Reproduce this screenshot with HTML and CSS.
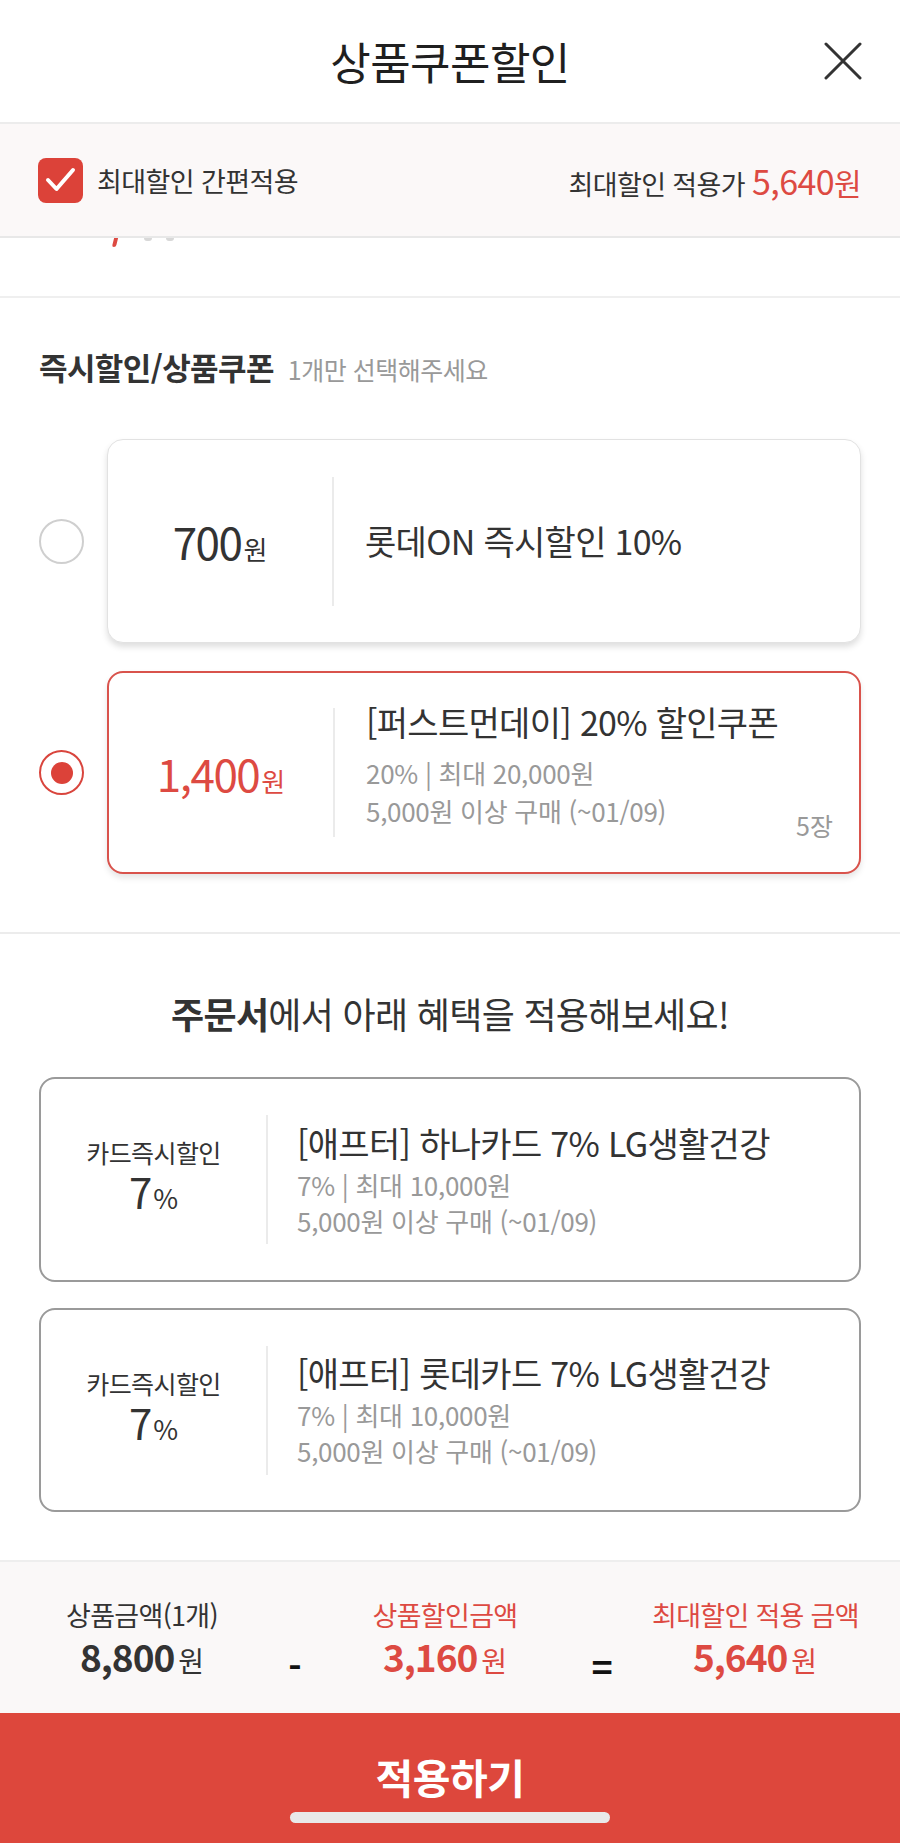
FILE: index.html
```html
<!DOCTYPE html>
<html lang="ko">
<head>
<meta charset="utf-8">
<title>상품쿠폰할인</title>
<link rel="stylesheet" href="styles.css">
</head>
<body>
<div class="page">
  <header class="header">
    <div class="header-side"></div>
    <h1 class="title">상품쿠폰할인</h1>
    <div class="header-side header-right">
      <svg class="close" width="38" height="38" viewBox="0 0 38 38"><path d="M2 2 L36 36 M36 2 L2 36" stroke="#333" stroke-width="3" fill="none" stroke-linecap="round"/></svg>
    </div>
  </header>

  <div class="band">
    <div class="band-left">
      <span class="checkbox">
        <svg width="45" height="45" viewBox="0 0 45 45"><path d="M10 22 L18.5 31 L35 12" stroke="#fff" stroke-width="4" fill="none" stroke-linecap="round" stroke-linejoin="round"/></svg>
      </span>
      <span class="band-label">최대할인 간편적용</span>
    </div>
    <div class="band-right">최대할인 적용가 <span class="band-price">5,640<span class="won-s">원</span></span></div>
  </div>

  <div class="peek" aria-hidden="true">
    <span class="frag frag-red"></span>
    <span class="frag frag-gray"></span>
    <span class="frag frag-gray"></span>
  </div>

  <section class="section s1">
    <div class="sec-title"><strong>즉시할인/상품쿠폰</strong><span class="sec-sub">1개만 선택해주세요</span></div>

    <div class="row">
      <span class="radio"></span>
      <div class="card card-plain">
        <div class="amt"><span class="amt-num">700</span><span class="amt-won">원</span></div>
        <div class="vline"></div>
        <div class="info">
          <div class="info-title">롯데ON 즉시할인 10%</div>
        </div>
      </div>
    </div>

    <div class="row">
      <span class="radio on"><span class="dot"></span></span>
      <div class="card card-sel">
        <div class="amt red"><span class="amt-num">1,400</span><span class="amt-won">원</span></div>
        <div class="vline"></div>
        <div class="info">
          <div class="info-title">[퍼스트먼데이] 20% 할인쿠폰</div>
          <div class="info-line">20% | 최대 20,000원</div>
          <div class="info-line">5,000원 이상 구매 (~01/09)</div>
        </div>
        <div class="count">5장</div>
      </div>
    </div>
  </section>

  <section class="section s2">
    <div class="sec-head"><strong>주문서</strong>에서 아래 혜택을 적용해보세요!</div>

    <div class="card card-bene">
      <div class="bene-left">
        <div class="bene-label">카드즉시할인</div>
        <div class="bene-val"><span class="bene-num">7</span><span class="bene-pct">%</span></div>
      </div>
      <div class="vline"></div>
      <div class="info info-bene">
        <div class="info-title">[애프터] 하나카드 7% LG생활건강</div>
        <div class="info-line">7% | 최대 10,000원</div>
        <div class="info-line">5,000원 이상 구매 (~01/09)</div>
      </div>
    </div>

    <div class="card card-bene">
      <div class="bene-left">
        <div class="bene-label">카드즉시할인</div>
        <div class="bene-val"><span class="bene-num">7</span><span class="bene-pct">%</span></div>
      </div>
      <div class="vline"></div>
      <div class="info info-bene">
        <div class="info-title">[애프터] 롯데카드 7% LG생활건강</div>
        <div class="info-line">7% | 최대 10,000원</div>
        <div class="info-line">5,000원 이상 구매 (~01/09)</div>
      </div>
    </div>
  </section>

  <div class="summary">
    <div class="sum-col">
      <div class="sum-label">상품금액(1개)</div>
      <div class="sum-val"><b>8,800</b><span class="sum-won">원</span></div>
    </div>
    <div class="sum-op">-</div>
    <div class="sum-col red">
      <div class="sum-label">상품할인금액</div>
      <div class="sum-val"><b>3,160</b><span class="sum-won">원</span></div>
    </div>
    <div class="sum-op">=</div>
    <div class="sum-col red">
      <div class="sum-label">최대할인 적용 금액</div>
      <div class="sum-val"><b>5,640</b><span class="sum-won">원</span></div>
    </div>
  </div>

  <div class="apply">
    <div class="apply-text">적용하기</div>
    <div class="home-bar"></div>
  </div>
</div>
</body>
</html>
```

FILE: styles.css
```css
* { box-sizing: border-box; }
html, body { margin: 0; padding: 0; background: #fff; }
body {
  font-family: "Noto Sans CJK KR", "Noto Sans", sans-serif;
  color: #333;
  width: 900px;
}
.page { width: 900px; height: 1843px; overflow: hidden; display: flex; flex-direction: column; }

.red { color: #dd4a42; }
.gray { color: #999; }

/* header */
.header {
  height: 122px;
  display: grid;
  grid-template-columns: 1fr auto 1fr;
  align-items: center;
  flex: none;
}
.title { margin: 0; font-size: 44px; font-weight: 400; letter-spacing: -0.6px; color: #1f1f1f; line-height: 1; }
.header-right { display: flex; justify-content: flex-end; padding-right: 38px; }
.close { display: block; }

/* band */
.band {
  flex: none;
  height: 116px;
  background: #fbf8f8;
  border-top: 2px solid #ececec;
  border-bottom: 2px solid #e8e8e8;
  display: flex;
  align-items: center;
  justify-content: space-between;
  padding: 0 39px 0 38px;
}
.band-left { display: flex; align-items: center; gap: 14px; }
.checkbox {
  width: 45px; height: 45px; border-radius: 8px; background: #dc4239;
  display: block; flex: none;
}
.checkbox svg { display: block; }
.band-label { font-size: 27px; letter-spacing: -0.6px; color: #333; }
.band-right { font-size: 27px; letter-spacing: -0.6px; color: #333; }
.band-price { font-size: 34px; color: #dd4a42; letter-spacing: -0.6px; }
.won-s { font-size: 30px; }

/* peek: bottom edge of scrolled-under content */
.peek {
  flex: none; height: 60px; border-bottom: 2px solid #efefef;
  display: flex; align-items: flex-start; padding-left: 113px;
}
.frag { display: block; flex: none; }
.frag-red { width: 4px; height: 9px; background: #dd4a42; transform: skewX(-14deg); border-radius: 0 0 2px 2px; }
.frag-gray { width: 8px; height: 3px; background: #d8d8d8; border-radius: 0 0 4px 4px; margin-left: 27px; }
.frag-gray + .frag-gray { margin-left: 14px; }

/* sections */
.section { flex: none; }
.s1 { padding: 49px 39px 58px; border-bottom: 2px solid #ececec; }
.sec-title { display: flex; align-items: baseline; gap: 14px; line-height: 40px; }
.sec-title strong { font-size: 31px; font-weight: 700; letter-spacing: -0.6px; color: #333; }
.sec-sub { font-size: 25px; color: #999; letter-spacing: -0.5px; }

.row { display: flex; align-items: center; gap: 23px; margin-top: 28px; }
.s1 .sec-title + .row { margin-top: 50px; }

.radio {
  width: 45px; height: 45px; border-radius: 50%;
  border: 2px solid #cfcfcf; flex: none;
  display: flex; align-items: center; justify-content: center;
}
.radio.on { border-color: #d9453d; }
.dot { width: 22px; height: 22px; border-radius: 50%; background: #dc4239; }

.card {
  flex: 1;
  height: 204px;
  border-radius: 16px;
  display: flex;
  align-items: center;
  background: #fff;
}
.card-plain { border: 1.5px solid #e2e2e2; box-shadow: 0 4px 6px rgba(0,0,0,0.13); }
.card-sel { border: 2px solid #d9534c; box-shadow: 0 4px 6px rgba(0,0,0,0.10); height: 203px; }

.amt { width: 224px; text-align: center; flex: none; white-space: nowrap; }
.amt-num { font-size: 44px; letter-spacing: -1.5px; }
.amt-won { font-size: 26px; margin-left: 2px; }

.vline { width: 2px; height: 129px; background: #ebebeb; flex: none; }

.info { flex: 1; padding-left: 31px; }
.info-title { font-size: 34px; line-height: 44px; letter-spacing: -0.7px; color: #333; margin-bottom: 10px; white-space: nowrap; }
.info-line { font-size: 26px; line-height: 38px; color: #999; letter-spacing: -0.3px; white-space: nowrap; }
.card-plain .info-title { margin-bottom: 0; }
.card-sel .info { margin-bottom: 15px; }

.count { align-self: flex-end; margin: 0 26px 32px 0; font-size: 25px; color: #999; line-height: 30px; }

.s2 { padding: 56px 39px 48px; }
.sec-head { text-align: center; font-size: 36px; line-height: 46px; letter-spacing: -0.7px; color: #333; margin-bottom: 41px; }
.sec-head strong { font-weight: 700; }

.card-bene { border: 2px solid #9a9a9a; height: 205px; box-shadow: none; }
.card-bene + .card-bene { margin-top: 26px; height: 204px; }
.bene-left { width: 225px; flex: none; text-align: center; }
.bene-label { font-size: 25px; line-height: 34px; letter-spacing: -0.6px; color: #333; }
.bene-val { line-height: 44px; }
.bene-num { font-size: 42px; }
.bene-pct { font-size: 27px; margin-left: 1px; }
.info-bene { padding-left: 29px; }
.info-bene .info-title { margin-bottom: 2px; }
.info-bene .info-line { line-height: 36px; }

/* summary */
.summary {
  flex: none;
  height: 153px;
  background: #faf8f8;
  border-top: 2px solid #eeeeee;
  display: grid;
  grid-template-columns: 220px 86px 214px 100px 206px;
  padding-left: 32px;
  padding-top: 10px;
  align-content: center;
}
.sum-col { text-align: center; white-space: nowrap; }
.sum-label { font-size: 27px; line-height: 36px; letter-spacing: -0.7px; }
.sum-val { line-height: 46px; margin-top: 0; white-space: nowrap; }
.sum-val b { font-size: 37px; font-weight: 700; letter-spacing: -1px; }
.sum-won { font-size: 28px; margin-left: 4px; }
.sum-op { align-self: end; text-align: center; font-size: 36px; font-weight: 700; line-height: 46px; color: #111; }

/* apply */
.apply {
  flex: none;
  height: 130px;
  background: #dd473c;
  display: flex;
  flex-direction: column;
  align-items: center;
  padding-top: 37px;
}
.apply-text { color: #fff; font-size: 41px; font-weight: 700; line-height: 52px; letter-spacing: -0.5px; }
.home-bar { width: 320px; height: 11px; border-radius: 6px; background: #e9e9e9; margin-top: 10px; }
```
